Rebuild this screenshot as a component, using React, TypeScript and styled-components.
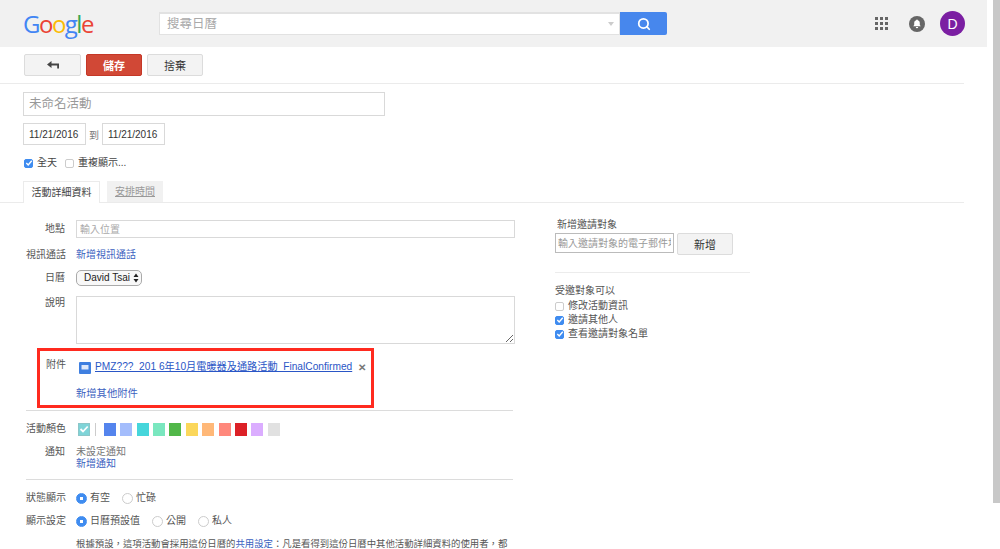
import React from 'react';
import styled, { createGlobalStyle } from 'styled-components';
import { Search } from 'lucide-react';

const SWATCHES = [
  '#5484ed',
  '#a4bdfc',
  '#46d6db',
  '#7ae7bf',
  '#51b749',
  '#fbd75b',
  '#ffb878',
  '#ff887c',
  '#dc2127',
  '#dbadff',
  '#e1e1e1',
];

const GlobalStyle = createGlobalStyle`
  html, body {
    margin: 0;
    padding: 0;
    background: #fff;
    overflow: hidden;
  }
  * {
    box-sizing: border-box;
  }
  body, input, textarea, button {
    font-family: 'Liberation Sans', 'Noto Sans CJK TC', sans-serif;
    font-size: 10px;
    color: #444;
  }
`;

function CheckBox({ checked }: { checked?: boolean }) {
  return (
    <Box $checked={checked}>
      {checked && (
        <svg width="8" height="8" viewBox="0 0 9 9">
          <path d="M1.5 4.6 L3.6 6.7 L7.6 2" fill="none" stroke="#fff" strokeWidth="1.6" />
        </svg>
      )}
    </Box>
  );
}

function RadioOption({ label, checked }: { label: string; checked?: boolean }) {
  return (
    <RadioLabel>
      <Radio $checked={checked} />
      {label}
    </RadioLabel>
  );
}

export default function App() {
  return (
    <Page>
      <GlobalStyle />
      <Main>
        <Header>
          <Logo>
            <Letter $color="#4285f4">G</Letter>
            <Letter $color="#ea4335">o</Letter>
            <Letter $color="#fbbc05">o</Letter>
            <Letter $color="#4285f4">g</Letter>
            <Letter $color="#34a853">l</Letter>
            <Letter $color="#ea4335">e</Letter>
          </Logo>
          <SearchBox>
            <SearchInput placeholder="搜尋日曆" />
            <SearchCaret />
          </SearchBox>
          <SearchButton>
            <Search size={14} strokeWidth={3} color="#fff" />
          </SearchButton>
          <HeaderRight>
            <AppsIcon width="13" height="13" viewBox="0 0 13 13">
              {[0, 5, 10].map((y) =>
                [0, 5, 10].map((x) => <rect key={`${x}-${y}`} x={x} y={y} width="3" height="3" fill="#666" />),
              )}
            </AppsIcon>
            <BellIcon width="16" height="16" viewBox="0 0 16 16">
              <circle cx="8" cy="8" r="8" fill="#666" />
              <path d="M8 3.4a.8.8 0 0 1 .8.8c1.4.4 2 1.5 2 2.8v2l1 1.2H4.200l1-1.2V7c0-1.300.6-2.400 2-2.800A.8.8 0 0 1 8 3.400z" fill="#fff" />
              <path d="M6.800 11h2.400a1.200 1.200 0 0 1-2.400 0z" fill="#fff" />
            </BellIcon>
            <Avatar>D</Avatar>
          </HeaderRight>
        </Header>

        <Toolbar>
          <ToolButton $width={57}>
            <svg width="12" height="9" viewBox="0 0 12 9">
              <path d="M0 3.500 L4.500 0 V2.500 H12 V7.500 H10.200 V4.500 H4.500 V7 Z" fill="#444" />
            </svg>
          </ToolButton>
          <SaveButton>儲存</SaveButton>
          <ToolButton $width={56}>捨棄</ToolButton>
        </Toolbar>

        <TopForm>
          <TitleInput placeholder="未命名活動" />
          <DateRow>
            <DateInput defaultValue="11/21/2016" />
            <span>到</span>
            <DateInput defaultValue="11/21/2016" />
          </DateRow>
          <AllDayRow>
            <CheckLabel>
              <CheckBox checked />
              全天
            </CheckLabel>
            <CheckLabel>
              <CheckBox />
              重複顯示...
            </CheckLabel>
          </AllDayRow>
        </TopForm>

        <Tabs>
          <ActiveTab>活動詳細資料</ActiveTab>
          <MutedTab>安排時間</MutedTab>
        </Tabs>

        <Body>
          <LeftColumn>
            <FormRow $top={17} $center>
              <Label>地點</Label>
              <WideInput placeholder="輸入位置" />
            </FormRow>
            <FormRow $top={10}>
              <Label>視訊通話</Label>
              <Link>新增視訊通話</Link>
            </FormRow>
            <FormRow $top={8} $center>
              <Label>日曆</Label>
              <CalendarSelect>
                David Tsai
                <svg width="6" height="10" viewBox="0 0 6 10">
                  <path d="M3 0.500 L5.500 4 H0.500 Z M3 9.500 L0.500 6 H5.500 Z" fill="#222" />
                </svg>
              </CalendarSelect>
            </FormRow>
            <FormRow $top={10}>
              <Label>說明</Label>
              <Description />
            </FormRow>

            <AttachmentBox>
              <AttachmentRow>
                <AttachmentLabel>附件</AttachmentLabel>
                <FileIcon width="12" height="12" viewBox="0 0 12 12">
                  <rect width="12" height="12" rx="1" fill="#3f7fe0" />
                  <path d="M2.500 3 H9.500 V7.500 H2.500 Z" fill="#dfe9fb" />
                </FileIcon>
                <FileLink>PMZ???_201 6年10月電暖器及通路活動_FinalConfirmed</FileLink>
                <CloseMark>✕</CloseMark>
              </AttachmentRow>
              <AddAttachment>新增其他附件</AddAttachment>
            </AttachmentBox>

            <Divider $top={2} />

            <FormRow $top={11}>
              <Label>活動顏色</Label>
              <ColorRow>
                <SelectedColor>
                  <svg width="10" height="10" viewBox="0 0 10 10">
                    <path d="M1.500 5 L4 7.500 L8.700 2.500" fill="none" stroke="#fff" strokeWidth="1.800" />
                  </svg>
                </SelectedColor>
                <ColorSeparator />
                {SWATCHES.map((color) => (
                  <Swatch key={color} $color={color} />
                ))}
              </ColorRow>
            </FormRow>
            <FormRow $top={9}>
              <Label>通知</Label>
              <NotifyStack>
                <span>未設定通知</span>
                <Link>新增通知</Link>
              </NotifyStack>
            </FormRow>

            <Divider $top={9} />

            <FormRow $top={11}>
              <Label>狀態顯示</Label>
              <RadioGroup>
                <RadioOption label="有空" checked />
                <RadioOption label="忙碌" />
              </RadioGroup>
            </FormRow>
            <FormRow $top={9}>
              <Label>顯示設定</Label>
              <RadioGroup>
                <RadioOption label="日曆預設值" checked />
                <RadioOption label="公開" />
                <RadioOption label="私人" />
              </RadioGroup>
            </FormRow>
            <Note>
              根據預設，這項活動會採用這份日曆的<Link>共用設定</Link>：凡是看得到這份日曆中其他活動詳細資料的使用者，都
            </Note>
          </LeftColumn>

          <RightColumn>
            <GuestTitle>新增邀請對象</GuestTitle>
            <GuestRow>
              <GuestInput placeholder="輸入邀請對象的電子郵件地址" />
              <ToolButton $width={56}>新增</ToolButton>
            </GuestRow>
            <RightDivider />
            <span>受邀對象可以</span>
            <GuestOptions>
              <CheckLabel>
                <CheckBox />
                修改活動資訊
              </CheckLabel>
              <CheckLabel>
                <CheckBox checked />
                邀請其他人
              </CheckLabel>
              <CheckLabel>
                <CheckBox checked />
                查看邀請對象名單
              </CheckLabel>
            </GuestOptions>
          </RightColumn>
        </Body>
      </Main>
      <ScrollThumb />
    </Page>
  );
}

const Page = styled.div`
  width: 1000px;
  height: 549px;
  display: flex;
  overflow: hidden;
  background: #fff;
`;

const Main = styled.div`
  width: 987px;
  flex: none;
`;

const ScrollThumb = styled.div`
  width: 7px;
  height: 503px;
  margin-left: 6px;
  background: #c8c8c8;
`;

const Header = styled.header`
  height: 47px;
  padding: 12px 22px 0 24px;
  background: #f1f1f1;
  display: flex;
  align-items: flex-start;
`;

const Logo = styled.div`
  width: 135px;
  margin-top: -3px;
  margin-left: -1px;
  margin-right: 1px;
  font-family: 'Open Sans', sans-serif;
  font-size: 24px;
  line-height: 30px;
  letter-spacing: -1.500px;
`;

const Letter = styled.span<{ $color: string }>`
  color: ${({ $color }) => $color};
`;

const SearchBox = styled.div`
  width: 461px;
  height: 23px;
  background: #fff;
  border: 1px solid #e2e2e2;
  border-top-width: 2px;
  display: flex;
  align-items: center;
`;

const SearchInput = styled.input`
  flex: 1;
  border: 0;
  outline: 0;
  padding: 0 7px;
  font-size: 12.500px;
  background: transparent;
  &::placeholder {
    color: #aaa;
  }
`;

const SearchCaret = styled.div`
  width: 0;
  height: 0;
  margin-right: 5px;
  border-left: 3px solid transparent;
  border-right: 3px solid transparent;
  border-top: 4px solid #ccc;
`;

const SearchButton = styled.button`
  width: 47px;
  height: 23px;
  padding: 0;
  border: 0;
  border-radius: 0 2px 2px 0;
  background: #4787ed;
  display: flex;
  align-items: center;
  justify-content: center;
`;

const HeaderRight = styled.div`
  margin-left: auto;
  display: flex;
  align-items: center;
  margin-top: -1px;
`;

const AppsIcon = styled.svg`
  margin-right: 21px;
`;

const BellIcon = styled.svg`
  margin-right: 15px;
`;

const Avatar = styled.div`
  width: 25px;
  height: 25px;
  border-radius: 50%;
  background: #7b1fa2;
  color: #fff;
  font-size: 14px;
  display: flex;
  align-items: center;
  justify-content: center;
`;

const Toolbar = styled.div`
  height: 37px;
  width: 964px;
  padding: 7px 0 0 24px;
  border-bottom: 1px solid #ebebeb;
  display: flex;
  gap: 5px;
  align-items: flex-start;
`;

const ToolButton = styled.button<{ $width: number }>`
  width: ${({ $width }) => $width}px;
  height: 22px;
  padding: 0;
  flex: none;
  border: 1px solid #dcdcdc;
  border-radius: 2px;
  background: #f3f3f3;
  color: #333;
  font-size: 11px;
  display: flex;
  align-items: center;
  justify-content: center;
`;

const SaveButton = styled.button`
  width: 56px;
  height: 22px;
  padding: 0;
  border: 1px solid #c53727;
  border-radius: 2px;
  background: #d14836;
  color: #fff;
  font-size: 11px;
  font-weight: bold;
`;

const TopForm = styled.div`
  padding: 8px 0 0 23px;
`;

const TitleInput = styled.input`
  display: block;
  width: 362px;
  height: 24px;
  padding: 0 5px;
  border: 1px solid #d9d9d9;
  outline: 0;
  font-size: 12.500px;
  &::placeholder {
    color: #999;
  }
`;

const DateRow = styled.div`
  margin-top: 7px;
  display: flex;
  align-items: center;
  gap: 3px;
  color: #777;
`;

const DateInput = styled.input`
  width: 63px;
  height: 22px;
  padding: 0 5px;
  border: 1px solid #d9d9d9;
  outline: 0;
  color: #333;
  font-size: 10px;
`;

const AllDayRow = styled.div`
  margin-top: 11px;
  padding-left: 1px;
  height: 14px;
  display: flex;
  gap: 8px;
`;

const CheckLabel = styled.label`
  height: 14px;
  display: flex;
  align-items: center;
  gap: 4px;
  line-height: 14px;
`;

const Box = styled.span<{ $checked?: boolean }>`
  width: 9px;
  height: 9px;
  flex: none;
  border-radius: 2px;
  border: 1px solid ${({ $checked }) => ($checked ? '#3f8cf0' : '#ccc')};
  background: ${({ $checked }) => ($checked ? '#3f8cf0' : '#fff')};
  display: flex;
  align-items: center;
  justify-content: center;
  svg {
    flex: none;
  }
`;

const Tabs = styled.div`
  margin-top: 11px;
  width: 964px;
  height: 22px;
  padding-left: 23px;
  border-bottom: 1px solid #ebebeb;
  display: flex;
  gap: 7px;
`;

const ActiveTab = styled.div`
  width: 77px;
  height: 22px;
  background: #fff;
  border: 1px solid #ebebeb;
  border-bottom: 0;
  line-height: 21px;
  text-align: center;
`;

const MutedTab = styled.div`
  width: 56px;
  height: 21px;
  background: #f1f1f1;
  color: #999;
  line-height: 21px;
  text-align: center;
  text-decoration: underline;
`;

const Body = styled.div`
  display: flex;
`;

const LeftColumn = styled.div`
  width: 555px;
  flex: none;
  padding-left: 26px;
`;

const FormRow = styled.div<{ $top: number; $center?: boolean }>`
  margin-top: ${({ $top }) => $top}px;
  display: flex;
  gap: 11px;
  align-items: ${({ $center }) => ($center ? 'center' : 'flex-start')};
  line-height: 14px;
`;

const Label = styled.div`
  width: 39px;
  flex: none;
  text-align: right;
  color: #555;
  line-height: 14px;
  white-space: nowrap;
`;

const WideInput = styled.input`
  width: 439px;
  height: 18px;
  padding: 0 3px;
  border: 1px solid #d9d9d9;
  outline: 0;
  font-size: 10px;
  &::placeholder {
    color: #aaa;
  }
`;

const Link = styled.a`
  color: #3b5fc0;
`;

const CalendarSelect = styled.div`
  width: 66px;
  height: 16px;
  border: 1px solid #aaa;
  border-radius: 5px;
  padding: 0 2px 0 7px;
  background: #f8f8f8;
  color: #222;
  display: flex;
  align-items: center;
  justify-content: space-between;
`;

const Description = styled.textarea`
  display: block;
  width: 439px;
  height: 48px;
  border: 1px solid #d9d9d9;
  outline: 0;
  padding: 3px;
`;

const AttachmentBox = styled.div`
  margin: 4px 0 0 11px;
  width: 337px;
  height: 60px;
  border: 3px solid #ff2a1f;
  padding: 7px 0 0 6px;
`;

const AttachmentRow = styled.div`
  display: flex;
  align-items: flex-start;
`;

const AttachmentLabel = styled.div`
  width: 20px;
  flex: none;
  color: #555;
  line-height: 14px;
`;

const FileIcon = styled.svg`
  margin: 4px 4px 0 13px;
  flex: none;
`;

const FileLink = styled.a`
  margin-top: 2px;
  color: #2a56c6;
  text-decoration: underline;
  font-size: 10.180px;
  line-height: 14px;
  white-space: nowrap;
`;

const CloseMark = styled.span`
  margin: 4px 0 0 6px;
  color: #777;
  font-size: 10px;
  font-weight: bold;
  line-height: 12px;
`;

const AddAttachment = styled(Link)`
  display: block;
  margin: 13px 0 0 30px;
  line-height: 14px;
  font-size: 10.300px;
`;

const Divider = styled.div<{ $top: number }>`
  margin-top: ${({ $top }) => $top}px;
  width: 487px;
  height: 1px;
  background: #dcdcdc;
`;

const ColorRow = styled.div`
  margin-left: 2px;
  display: flex;
  align-items: center;
  height: 14px;
  gap: 4.400px;
`;

const SelectedColor = styled.div`
  width: 12px;
  height: 13px;
  border: 1px solid #8cc6c8;
  background: #7fd4d8;
  display: flex;
  align-items: center;
  justify-content: center;
`;

const ColorSeparator = styled.div`
  width: 1px;
  height: 13px;
  margin: 0 3px 0 1px;
  background: #ccc;
`;

const Swatch = styled.div<{ $color: string }>`
  width: 12px;
  height: 13px;
  background: ${({ $color }) => $color};
`;

const NotifyStack = styled.div`
  margin-top: 1px;
  display: flex;
  flex-direction: column;
  line-height: 12px;
  color: #777;
`;

const RadioGroup = styled.div`
  display: flex;
  gap: 12px;
`;

const RadioLabel = styled.label`
  height: 14px;
  display: flex;
  align-items: center;
  gap: 3px;
  color: #555;
`;

const Radio = styled.span<{ $checked?: boolean }>`
  width: 11px;
  height: 11px;
  flex: none;
  border-radius: 50%;
  border: 1px solid ${({ $checked }) => ($checked ? '#3f8cf0' : '#ccc')};
  background: ${({ $checked }) => ($checked ? 'radial-gradient(circle, #fff 0 1.500px, #3f8cf0 2px)' : '#fff')};
`;

const Note = styled.div`
  margin: 9px 0 0 50px;
  width: 440px;
  font-size: 9.400px;
  line-height: 14px;
  white-space: nowrap;
  color: #555;
`;

const RightColumn = styled.div`
  padding-top: 15px;
  display: flex;
  flex-direction: column;
  width: 195px;
  line-height: 14px;
  color: #555;
`;

const GuestTitle = styled.div`
  padding-left: 2px;
`;

const GuestRow = styled.div`
  margin-top: 1px;
  display: flex;
  align-items: flex-start;
  gap: 3px;
`;

const GuestInput = styled.input`
  width: 119px;
  height: 20px;
  padding: 0 2px;
  border: 1px solid #bbb;
  outline: 0;
  font-size: 10px;
  &::placeholder {
    color: #999;
  }
`;

const RightDivider = styled.div`
  height: 1px;
  margin: 17px 0 11px;
  background: #ececec;
`;

const GuestOptions = styled.div`
  margin-top: 1px;
  display: flex;
  flex-direction: column;
`;
